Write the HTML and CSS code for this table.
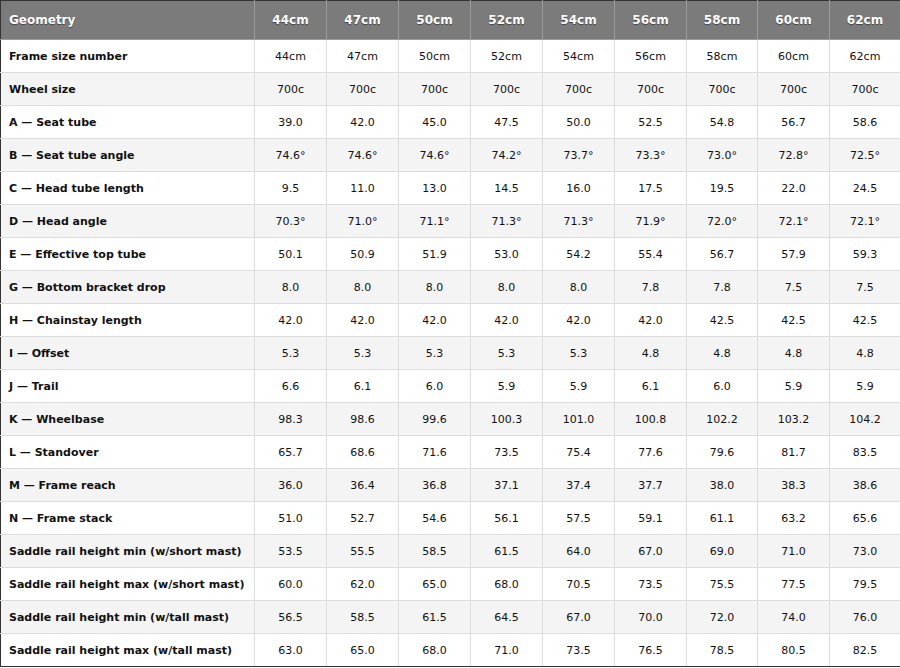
FILE: index.html
```html
<!DOCTYPE html>
<html>
<head>
<meta charset="utf-8">
<link rel="stylesheet" href="styles.css">
</head>
<body>
<table class="geo">
<colgroup><col class="c-label"><col span="6" class="c-size"><col class="c-narrow"><col class="c-size"><col class="c-narrow"></colgroup>
<thead>
<tr><th class="label">Geometry</th><th>44cm</th><th>47cm</th><th>50cm</th><th>52cm</th><th>54cm</th><th>56cm</th><th>58cm</th><th>60cm</th><th>62cm</th></tr>
</thead>
<tbody>
<tr><th class="label">Frame size number</th><td>44cm</td><td>47cm</td><td>50cm</td><td>52cm</td><td>54cm</td><td>56cm</td><td>58cm</td><td>60cm</td><td>62cm</td></tr>
<tr><th class="label">Wheel size</th><td>700c</td><td>700c</td><td>700c</td><td>700c</td><td>700c</td><td>700c</td><td>700c</td><td>700c</td><td>700c</td></tr>
<tr><th class="label">A — Seat tube</th><td>39.0</td><td>42.0</td><td>45.0</td><td>47.5</td><td>50.0</td><td>52.5</td><td>54.8</td><td>56.7</td><td>58.6</td></tr>
<tr><th class="label">B — Seat tube angle</th><td>74.6°</td><td>74.6°</td><td>74.6°</td><td>74.2°</td><td>73.7°</td><td>73.3°</td><td>73.0°</td><td>72.8°</td><td>72.5°</td></tr>
<tr><th class="label">C — Head tube length</th><td>9.5</td><td>11.0</td><td>13.0</td><td>14.5</td><td>16.0</td><td>17.5</td><td>19.5</td><td>22.0</td><td>24.5</td></tr>
<tr><th class="label">D — Head angle</th><td>70.3°</td><td>71.0°</td><td>71.1°</td><td>71.3°</td><td>71.3°</td><td>71.9°</td><td>72.0°</td><td>72.1°</td><td>72.1°</td></tr>
<tr><th class="label">E — Effective top tube</th><td>50.1</td><td>50.9</td><td>51.9</td><td>53.0</td><td>54.2</td><td>55.4</td><td>56.7</td><td>57.9</td><td>59.3</td></tr>
<tr><th class="label">G — Bottom bracket drop</th><td>8.0</td><td>8.0</td><td>8.0</td><td>8.0</td><td>8.0</td><td>7.8</td><td>7.8</td><td>7.5</td><td>7.5</td></tr>
<tr><th class="label">H — Chainstay length</th><td>42.0</td><td>42.0</td><td>42.0</td><td>42.0</td><td>42.0</td><td>42.0</td><td>42.5</td><td>42.5</td><td>42.5</td></tr>
<tr><th class="label">I — Offset</th><td>5.3</td><td>5.3</td><td>5.3</td><td>5.3</td><td>5.3</td><td>4.8</td><td>4.8</td><td>4.8</td><td>4.8</td></tr>
<tr><th class="label">J — Trail</th><td>6.6</td><td>6.1</td><td>6.0</td><td>5.9</td><td>5.9</td><td>6.1</td><td>6.0</td><td>5.9</td><td>5.9</td></tr>
<tr><th class="label">K — Wheelbase</th><td>98.3</td><td>98.6</td><td>99.6</td><td>100.3</td><td>101.0</td><td>100.8</td><td>102.2</td><td>103.2</td><td>104.2</td></tr>
<tr><th class="label">L — Standover</th><td>65.7</td><td>68.6</td><td>71.6</td><td>73.5</td><td>75.4</td><td>77.6</td><td>79.6</td><td>81.7</td><td>83.5</td></tr>
<tr><th class="label">M — Frame reach</th><td>36.0</td><td>36.4</td><td>36.8</td><td>37.1</td><td>37.4</td><td>37.7</td><td>38.0</td><td>38.3</td><td>38.6</td></tr>
<tr><th class="label">N — Frame stack</th><td>51.0</td><td>52.7</td><td>54.6</td><td>56.1</td><td>57.5</td><td>59.1</td><td>61.1</td><td>63.2</td><td>65.6</td></tr>
<tr><th class="label">Saddle rail height min (w/short mast)</th><td>53.5</td><td>55.5</td><td>58.5</td><td>61.5</td><td>64.0</td><td>67.0</td><td>69.0</td><td>71.0</td><td>73.0</td></tr>
<tr><th class="label">Saddle rail height max (w/short mast)</th><td>60.0</td><td>62.0</td><td>65.0</td><td>68.0</td><td>70.5</td><td>73.5</td><td>75.5</td><td>77.5</td><td>79.5</td></tr>
<tr><th class="label">Saddle rail height min (w/tall mast)</th><td>56.5</td><td>58.5</td><td>61.5</td><td>64.5</td><td>67.0</td><td>70.0</td><td>72.0</td><td>74.0</td><td>76.0</td></tr>
<tr><th class="label">Saddle rail height max (w/tall mast)</th><td>63.0</td><td>65.0</td><td>68.0</td><td>71.0</td><td>73.5</td><td>76.5</td><td>78.5</td><td>80.5</td><td>82.5</td></tr>
</tbody>
</table>
</body>
</html>
```
FILE: styles.css
```css
html, body {
  margin: 0;
  padding: 0;
  background: #ffffff;
}
.geo {
  width: 900px;
  border-collapse: collapse;
  table-layout: fixed;
  font-family: "DejaVu Sans", Verdana, sans-serif;
  font-size: 11px;
  color: #111;
  border: 1px solid #333;
}
.c-label { width: 254px; }
.c-size { width: 72px; }
.c-narrow { width: 71px; }
.geo thead th {
  background: #7b7b7b;
  color: #ffffff;
  font-size: 12px;
  font-weight: bold;
  height: 38px;
  padding: 0;
  text-align: center;
  border: 1px solid #9a9a9a;
  border-top-color: #333;
  text-shadow: 0 1px 1px rgba(0, 0, 0, 0.45);
}
.geo thead th.label {
  text-align: left;
  padding-left: 8px;
}
.geo tbody th,
.geo tbody td {
  height: 32px;
  padding: 0;
  border: 1px solid #dcdcdc;
  text-align: center;
  font-weight: normal;
}
.geo tbody th.label {
  text-align: left;
  font-weight: bold;
  padding-left: 8px;
}
.geo tbody tr:nth-child(even) {
  background: #f4f4f4;
}
.geo thead th:first-child,
.geo tbody th:first-child { border-left-color: #333; }
.geo thead th:last-child,
.geo tbody td:last-child { border-right-color: #333; }
.geo tbody tr:last-child th,
.geo tbody tr:last-child td { border-bottom-color: #333; }
```
